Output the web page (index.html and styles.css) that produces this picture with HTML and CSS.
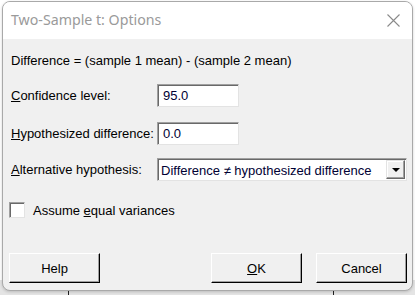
FILE: index.html
```html
<!DOCTYPE html>
<html>
<head>
<meta charset="utf-8">
<link rel="stylesheet" href="styles.css">
</head>
<body>
<div class="dialog">
  <div class="titlebar">
    <span class="title">Two-Sample t: Options</span>
    <svg class="close" width="13" height="13" viewBox="0 0 13 13"><path d="M0.5 0.5 L12.5 12.5 M12.5 0.5 L0.5 12.5" stroke="#8a8a8a" stroke-width="1.1" fill="none"/></svg>
  </div>
  <div class="content">
    <div class="formula">Difference = (sample 1 mean) - (sample 2 mean)</div>
    <div class="row r1"><span class="label"><u>C</u>onfidence level:</span><div class="field">95.0</div></div>
    <div class="row r2"><span class="label"><u>H</u>ypothesized difference:</span><div class="field">0.0</div></div>
    <div class="row r3"><span class="label"><u>A</u>lternative hypothesis:</span>
      <div class="combo"><span class="combo-text">Difference ≠ hypothesized difference</span><span class="combo-btn"><span class="arrow"></span></span></div>
    </div>
    <div class="check-row"><span class="checkbox"></span><span>Assume <u>e</u>qual variances</span></div>
    <div class="buttons">
      <button class="btn">Help</button>
      <div class="right-btns">
        <button class="btn"><u>O</u>K</button>
        <button class="btn">Cancel</button>
      </div>
    </div>
  </div>
</div>
</body>
</html>
```
FILE: styles.css
```css
html, body { margin: 0; padding: 0; }
body {
  width: 415px;
  height: 295px;
  overflow: hidden;
  padding: 1px 2px 0 2px;
  box-sizing: border-box;
  background:
    linear-gradient(to right, transparent 68px, #202020 68px, #202020 69px, transparent 69px, transparent 333px, #202020 333px, #202020 334px, transparent 334px) bottom / 100% 4px no-repeat,
    linear-gradient(#fff 280px, #e4e4e4 280px);
  font-family: "Liberation Sans", Arial, sans-serif;
  font-size: 13px;
  color: #000;
}
.dialog {
  width: 411px;
  height: 290px;
  box-sizing: border-box;
  border: 1px solid #a9a9a9;
  border-radius: 8px;
  overflow: hidden;
  background: #f0f0f0;
  display: flex;
  flex-direction: column;
  box-shadow: 0 1px 3px rgba(0,0,0,0.18);
}
.titlebar {
  height: 37px;
  flex: none;
  background: #fff;
  display: flex;
  align-items: center;
  justify-content: space-between;
  padding: 0 12px 0 8px;
}
.title {
  font-family: "Noto Sans", "Open Sans", sans-serif;
  font-size: 14.2px;
  color: #9a9a9a;
  margin-top: -2px;
}
.close { display: block; margin-top: -1px; }
.content {
  flex: 1;
  padding: 14px 5px 7px 8px;
  display: flex;
  flex-direction: column;
}
.formula { line-height: 16px; height: 16px; }
.row {
  display: flex;
  align-items: center;
  height: 23px;
}
.r1 { margin-top: 15px; }
.r2 { margin-top: 15px; }
.r3 { margin-top: 13px; }
.label { width: 146px; flex: none; }
.field {
  width: 82px;
  height: 23px;
  box-sizing: border-box;
  background: #fff;
  border: 1px solid;
  border-color: #a0a0a0 #e3e3e3 #e3e3e3 #a0a0a0;
  box-shadow: inset 1px 1px 0 #696969;
  padding: 3px 0 0 5px;
  line-height: 16px;
  color: #000033;
}
.combo {
  width: 250px;
  height: 23px;
  box-sizing: border-box;
  background: #fff;
  border: 1px solid;
  border-color: #a0a0a0 #e3e3e3 #e3e3e3 #a0a0a0;
  box-shadow: inset 1px 1px 0 #696969;
  display: flex;
  align-items: center;
  justify-content: space-between;
  padding: 1px 1px 0 3px;
}
.combo-text { color: #000033; }
.combo-btn {
  width: 19px;
  height: 19px;
  box-sizing: border-box;
  background: #f0f0f0;
  border: 1px solid;
  border-color: #e3e3e3 #696969 #696969 #e3e3e3;
  box-shadow: inset -1px -1px 0 #a0a0a0, inset 1px 1px 0 #fff;
  display: flex;
  align-items: center;
  justify-content: center;
  margin-top: -1px;
}
.arrow {
  width: 0; height: 0;
  border-left: 4px solid transparent;
  border-right: 4px solid transparent;
  border-top: 4px solid #000;
}
.check-row {
  margin-top: 21px;
  display: flex;
  align-items: center;
  gap: 8px;
  margin-left: -2px;
  height: 16px;
}
.checkbox {
  width: 16px;
  height: 16px;
  box-sizing: border-box;
  background: #fff;
  border: 1px solid;
  border-color: #a0a0a0 #e3e3e3 #e3e3e3 #a0a0a0;
  box-shadow: inset 1px 1px 0 #696969;
}
.buttons {
  margin-top: auto;
  display: flex;
  justify-content: space-between;
  margin-left: -2px;
}
.right-btns { display: flex; gap: 14px; }
.btn {
  width: 91px;
  height: 30px;
  box-sizing: border-box;
  background: #f0f0f0;
  border: 1px solid;
  border-color: #fff #000 #000 #fff;
  box-shadow: inset -1px -1px 0 #a0a0a0;
  font-family: inherit;
  font-size: inherit;
  color: #000;
  padding: 0;
}
```
